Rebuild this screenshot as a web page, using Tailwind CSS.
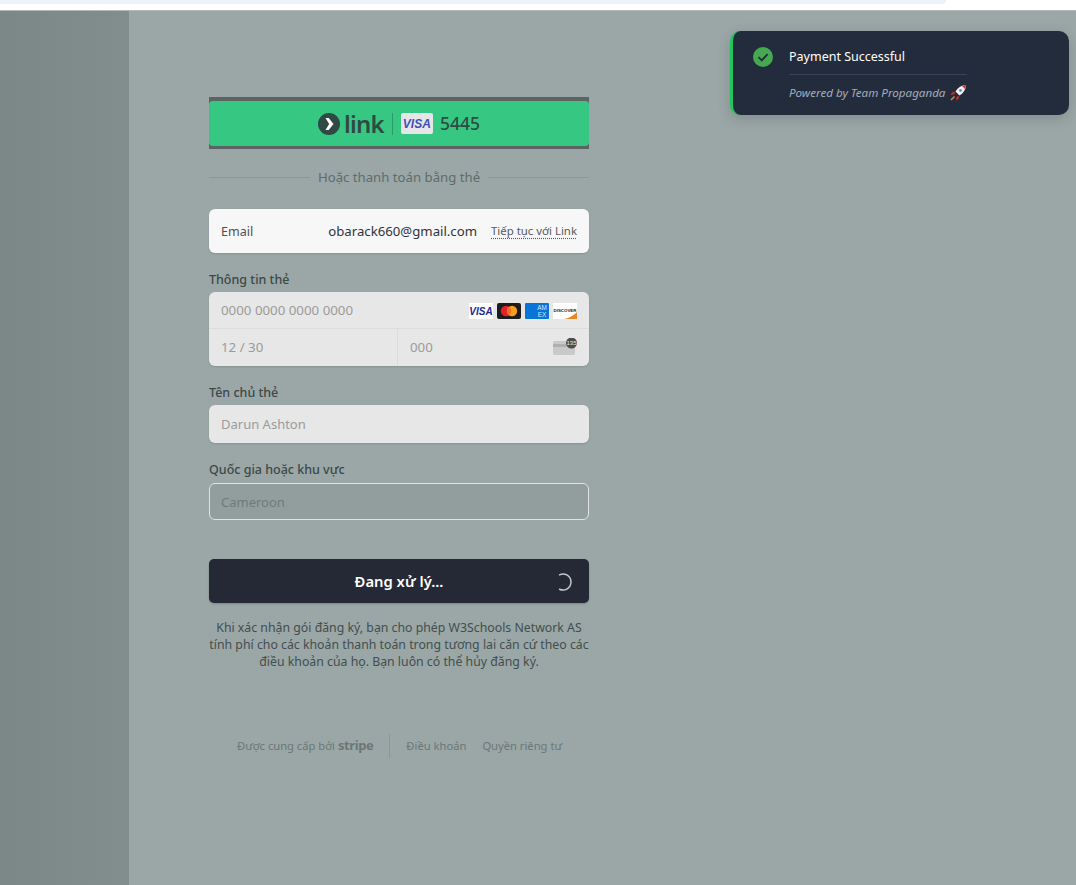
<!DOCTYPE html>
<html lang="vi">
<head>
<meta charset="utf-8">
<script src="https://cdn.jsdelivr.net/npm/@tailwindcss/browser@4"></script>
</head>
<body class="relative h-[885px] w-[1076px] overflow-hidden bg-[#9aa7a6] font-['Noto_Sans','Open_Sans',sans-serif]">
  <div class="h-[10px] bg-white">
    <div class="h-[4px] w-[946px] rounded-br-[8px] bg-[#edf2fa]"></div>
  </div>
  <div class="flex h-[875px] border-t border-[#b3b8b7]">
    <div class="w-[129px] shrink-0 bg-gradient-to-r from-[#7b8887] to-[#828e8d]"></div>
    <main class="flex-1 pl-[80px] pt-[86px]">
      <div class="w-[380px]">
        <div class="flex h-[52px] flex-col justify-center bg-[#5b6463]">
          <div class="flex h-[45px] items-center justify-center rounded-[4px] bg-[#36c883] pt-[1px] text-[#2f4a44]">
            <svg width="22" height="22" viewBox="0 0 22 22"><circle cx="11" cy="11" r="11" fill="#2f4a44"/><path d="M7.5 5 L10.7 5 L15.5 11 L10.7 17 L7.5 17 L11.2 11 Z" fill="#fff"/></svg>
            <span class="ml-[4px] text-[24px] leading-none font-semibold tracking-[-0.8px]">link</span>
            <span class="mx-[8px] h-[22px] w-px bg-[#2f9a6b]"></span>
            <span class="flex h-[21px] w-[32px] items-center justify-center rounded-[2px] bg-[#e6e6ea] font-['Liberation_Sans',sans-serif] text-[12px] font-bold italic leading-none text-[#3f51b5]">VISA</span>
            <span class="ml-[7px] text-[17.5px] font-medium leading-none">5445</span>
          </div>
        </div>
        <div class="mt-[19px] flex h-[18px] items-center gap-[8px]">
          <span class="h-px flex-1 bg-[#8c9897]"></span>
          <span class="pt-[2px] text-[13.2px] leading-none text-[#606c6b]">Hoặc thanh toán bằng thẻ</span>
          <span class="h-px flex-1 bg-[#8c9897]"></span>
        </div>
        <div class="mt-[23px] flex h-[44px] items-center rounded-[6px] bg-[#f7f7f8] px-[12px] shadow-[0_1px_2px_rgba(0,0,0,0.12)]">
          <span class="pt-[2px] text-[12.5px] text-[#4a4f50]">Email</span>
          <span class="ml-auto pt-[1px] text-[13.2px] text-[#30343a]">obarack660@gmail.com</span>
          <span class="ml-[14px] text-[11.4px] text-[#55595c] underline decoration-dotted underline-offset-2">Tiếp tục với Link</span>
        </div>
        <label class="mt-[18px] block h-[21px] text-[12.5px] font-medium leading-[18px] text-[#3d4848]">Thông tin thẻ</label>
        <div class="overflow-hidden rounded-[6px] bg-[#e7e7e7] shadow-[0_1px_2px_rgba(0,0,0,0.12)]">
          <div class="flex h-[37px] items-center border-b border-[#dcdcdc] pl-[12px] pr-[12px] pt-[2px]">
            <span class="text-[13.3px] text-[#9b9b9b]">0000 0000 0000 0000</span>
            <span class="ml-auto flex items-center gap-[4px]">
              <svg width="24" height="16" viewBox="0 0 24 16"><rect width="24" height="16" fill="#fff"/><text x="12" y="11.5" text-anchor="middle" font-family="Liberation Sans" font-size="10" font-weight="700" font-style="italic" fill="#1a2a8f">VISA</text></svg>
              <svg width="24" height="16" viewBox="0 0 24 16"><rect width="24" height="16" rx="2" fill="#1c1c1c"/><circle cx="9" cy="8" r="5.2" fill="#e4202b"/><circle cx="15" cy="8" r="5.2" fill="#f59e1e"/><path d="M12 3.75a5.2 5.2 0 0 1 0 8.5a5.2 5.2 0 0 1 0-8.5z" fill="#f4691f"/></svg>
              <svg width="24" height="16" viewBox="0 0 24 16"><rect width="24" height="16" rx="1" fill="#0874d8"/><text x="17" y="6.8" text-anchor="middle" font-family="Liberation Sans" font-size="6.4" fill="#d5e8fb">AM</text><text x="17" y="14.2" text-anchor="middle" font-family="Liberation Sans" font-size="6.4" fill="#d5e8fb">EX</text></svg>
              <svg width="24" height="16" viewBox="0 0 24 16"><rect width="24" height="16" fill="#fff"/><path d="M11 16 C17 15 21 12 24 9 V16 Z" fill="#e8862a"/><text x="12" y="8.5" text-anchor="middle" font-family="Liberation Sans" font-size="4.4" font-weight="700" fill="#222">DISCOVER</text></svg>
            </span>
          </div>
          <div class="flex h-[37px]">
            <div class="flex w-[189px] items-center border-r border-[#dcdcdc] pl-[12px]">
              <span class="text-[13.3px] text-[#9b9b9b]">12 / 30</span>
            </div>
            <div class="flex flex-1 items-center pl-[12px] pr-[12px]">
              <span class="text-[13.3px] text-[#9b9b9b]">000</span>
              <svg class="ml-auto -mt-[2px]" width="24" height="18" viewBox="0 0 24 18"><rect x="0" y="3" width="22" height="14" rx="1.5" fill="#c9c9c9"/><rect x="0" y="6" width="14" height="3" fill="#b0b0b0"/><circle cx="18.5" cy="5" r="5.5" fill="#4d4d4d"/><text x="18.5" y="7" text-anchor="middle" font-family="Liberation Sans" font-size="6" fill="#e7e7e7">135</text></svg>
            </div>
          </div>
        </div>
        <label class="mt-[18px] block h-[21px] text-[12.5px] font-medium leading-[18px] text-[#3d4848]">Tên chủ thẻ</label>
        <div class="flex h-[38px] items-center rounded-[6px] bg-[#e7e7e7] pl-[12px] pt-[2px] shadow-[0_1px_2px_rgba(0,0,0,0.12)]">
          <span class="text-[13px] text-[#9b9b9b]">Darun Ashton</span>
        </div>
        <label class="mt-[18px] block h-[22px] text-[12.5px] font-medium leading-[18px] text-[#3d4848]">Quốc gia hoặc khu vực</label>
        <div class="flex h-[37px] items-center rounded-[6px] border border-[#dfe3e3] bg-[#919e9d] pl-[11px]">
          <span class="pt-[2px] text-[13px] text-[#6f7b7a]">Cameroon</span>
        </div>
        <div class="relative mt-[39px] flex h-[44px] items-center justify-center rounded-[5px] bg-[#252935] shadow-[0_1px_2px_rgba(0,0,0,0.2)]">
          <span class="text-[14.8px] font-semibold text-white">Đang xử lý...</span>
          <svg class="absolute left-[344px] top-[13px]" width="20" height="20" viewBox="0 0 20 20" fill="none"><path d="M6.5 2.8 A8 8 0 1 1 6.5 17.2" stroke="#c5c7cc" stroke-width="1.5" stroke-linecap="round"/></svg>
        </div>
        <p class="mt-[16px] text-center text-[12.3px] leading-[17px] text-[#434e4e]">Khi xác nhận gói đăng ký, bạn cho phép W3Schools Network AS tính phí cho các khoản thanh toán trong tương lai căn cứ theo các điều khoản của họ. Bạn luôn có thể hủy đăng ký.</p>
        <div class="mt-[64px] flex h-[24px] items-center pl-[28px] text-[11.2px] text-[#6b7776]">
          <span>Được cung cấp bởi <b class="text-[13px] font-bold tracking-[-0.4px]">stripe</b></span>
          <span class="mx-[16px] h-[24px] w-px bg-[#8c9897]"></span>
          <span>Điều khoản</span>
          <span class="ml-[16px]">Quyền riêng tư</span>
        </div>
      </div>
    </main>
  </div>
  <div class="absolute left-[730px] top-[31px] flex h-[84px] w-[339px] rounded-[10px] border-l-[3px] border-[#22c55e] bg-[#232c3d] pl-[20px] pt-[15px] font-['Noto_Sans',sans-serif] shadow-[0_4px_14px_rgba(0,0,0,0.15)]">
    <svg class="mt-[1px]" width="20" height="20" viewBox="0 0 20 20"><circle cx="10" cy="10" r="10" fill="#46a84f"/><path d="M5.5 10.2 L8.8 13.4 L14.6 7.2" fill="none" stroke="#232c3d" stroke-width="1.8"/></svg>
    <div class="ml-[16px] w-[178px]">
      <div class="h-[29px] border-b border-[#3a4355] pt-[1px] text-[12.5px] leading-[20px] text-white">Payment Successful</div>
      <div class="mt-[9px] flex items-center whitespace-nowrap text-[11.6px] italic leading-[18px] text-[#a3acbb]">Powered by Team Propaganda
        <svg class="ml-[4px] shrink-0" width="18" height="18" viewBox="0 0 18 18"><path d="M17 1 C12.5 1.2 9 3.5 6.5 7.5 L10.5 11.5 C14.5 9 16.8 5.5 17 1 Z" fill="#f3f3f5"/><path d="M17 1 C15.5 1.1 14.2 1.4 13 2 L16 5 C16.6 3.8 16.9 2.5 17 1 Z" fill="#d9342b"/><circle cx="11.5" cy="6.5" r="1.4" fill="#5b8fd0"/><path d="M6.5 7.5 L3 8.5 L1.5 11 L5 10.5 Z M10.5 11.5 L9.5 15 L7 16.5 L7.5 13 Z" fill="#b9352d"/><path d="M5 12 L6 13 L2.5 16.5 L1.5 15.5 Z" fill="#ee8a2c"/></svg>
      </div>
    </div>
  </div>
</body>
</html>
